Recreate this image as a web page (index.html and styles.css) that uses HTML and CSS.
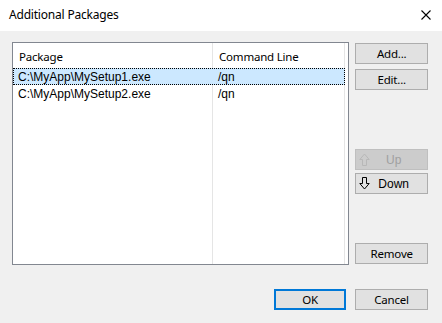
FILE: index.html
```html
<!DOCTYPE html>
<html>
<head>
<meta charset="utf-8">
<link rel="stylesheet" href="styles.css">
</head>
<body>
<div class="dialog">
  <div class="titlebar">
    <span class="title">Additional Packages</span>
    <svg class="close" width="10" height="10" viewBox="0 0 10 10"><path d="M0.5 0.5 L9.5 9.5 M9.5 0.5 L0.5 9.5" stroke="#000" stroke-width="1.1" fill="none"/></svg>
  </div>
  <div class="content">
    <div class="main">
      <div class="listbox">
        <div class="header">
          <div class="col c1">Package</div>
          <div class="col c2">Command Line</div>
        </div>
        <div class="row selected">
          <div class="cell c1">C:\MyApp\MySetup1.exe</div>
          <div class="cell c2">/qn</div>
        </div>
        <div class="row">
          <div class="cell c1">C:\MyApp\MySetup2.exe</div>
          <div class="cell c2">/qn</div>
        </div>
        <div class="fill">
          <div class="fc1"></div>
          <div class="fc2"></div>
        </div>
      </div>
      <div class="side">
        <button class="btn add">Add...</button>
        <button class="btn edit">Edit...</button>
        <div class="spacer"></div>
        <button class="btn arrow disabled">
          <svg class="ico" width="11" height="13" viewBox="0 0 11 13"><path d="M3.5 12.5 V6.5 H0.8 L5.5 1 L10.2 6.5 H7.5 V12.5 Z" fill="none" stroke="#b8b8b8" stroke-width="1"/></svg>
          <span>Up</span>
        </button>
        <button class="btn arrow down">
          <svg class="ico" width="11" height="13" viewBox="0 0 11 13"><path d="M3.5 0.5 V6.5 H0.8 L5.5 12 L10.2 6.5 H7.5 V0.5 Z" fill="none" stroke="#000" stroke-width="1"/></svg>
          <span>Down</span>
        </button>
        <div class="spacer2"></div>
        <button class="btn remove">Remove</button>
      </div>
    </div>
    <div class="footer">
      <button class="btn ok">OK</button>
      <button class="btn cancel">Cancel</button>
    </div>
  </div>
</div>
</body>
</html>
```
FILE: styles.css
```css
html, body {
  margin: 0;
  padding: 0;
  background: #f0f0f0;
}
.dialog {
  width: 442px;
  height: 323px;
  background: #f0f0f0;
  font-family: "Noto Sans", "Open Sans", sans-serif;
  font-size: 12px;
  color: #000;
}
.titlebar {
  height: 31px;
  background: #ffffff;
  display: flex;
  align-items: center;
  justify-content: space-between;
  padding: 0 11px 0 9px;
  box-sizing: border-box;
}
.title {
  font-size: 12px;
  letter-spacing: -0.2px;
  margin-top: -2px;
}
.close {
  display: block;
  margin-top: -1px;
}
.content {
  padding: 11px 13px 0 12px;
}
.main {
  display: flex;
  gap: 6px;
}
.listbox {
  width: 338px;
  height: 223px;
  box-sizing: border-box;
  border: 1px solid #828790;
  background: #fff;
  display: flex;
  flex-direction: column;
  overflow: hidden;
}
.header {
  display: flex;
  height: 25px;
  align-items: center;
  flex: none;
}
.col {
  height: 100%;
  display: flex;
  align-items: center;
  padding-left: 6px;
  padding-top: 1px;
  box-sizing: border-box;
  font-size: 11.5px;
  letter-spacing: -0.2px;
  border-right: 1px solid #e5e5e5;
}
.c1 { width: 200px; }
.c2 { width: 132px; }
.row {
  display: flex;
  height: 17px;
  flex: none;
  box-sizing: border-box;
  width: 332px;
  font-family: "Liberation Sans", Arial, sans-serif;
  font-size: 12px;
}
.row.selected {
  background: #cce8ff;
  outline: 1px dotted #000;
  outline-offset: -1px;
}
.cell {
  display: flex;
  align-items: center;
  padding-left: 5px;
  box-sizing: border-box;
  border-right: 1px solid #e5e5e5;
}
.row.selected .cell { border-right-color: transparent; }
.fill {
  flex: 1;
  display: flex;
}
.fc1 { width: 200px; border-right: 1px solid #e5e5e5; box-sizing: border-box; }
.fc2 { width: 132px; border-right: 1px solid #e5e5e5; box-sizing: border-box; }
.side {
  width: 74px;
  display: flex;
  flex-direction: column;
  padding-top: 1px;
  box-sizing: border-box;
}
.btn {
  width: 73px;
  height: 21px;
  box-sizing: border-box;
  border: 1px solid #adadad;
  background: #e1e1e1;
  font-family: "Noto Sans", "Open Sans", sans-serif;
  font-size: 11.5px;
  letter-spacing: -0.2px;
  color: #000;
  padding: 0;
  margin: 0;
  display: flex;
  align-items: center;
  justify-content: center;
}
.edit { margin-top: 5px; }
.spacer { height: 59px; flex: none; }
.arrow {
  position: relative;
  font-family: "Liberation Sans", Arial, sans-serif;
  font-size: 12px;
  letter-spacing: 0;
}
.arrow .ico {
  position: absolute;
  left: 3px;
  top: 3px;
}
.arrow span { padding-left: 4px; }
.disabled {
  background: #cccccc;
  border-color: #bfbfbf;
  color: #a0a0a0;
}
.down { margin-top: 3px; }
.spacer2 { flex: 1; }
.remove { margin-bottom: 1px; }
.footer {
  display: flex;
  justify-content: flex-end;
  gap: 9px;
  margin-top: 24px;
  padding-right: 1px;
}
.ok {
  border: 2px solid #0078d7;
  width: 72px;
}
```
